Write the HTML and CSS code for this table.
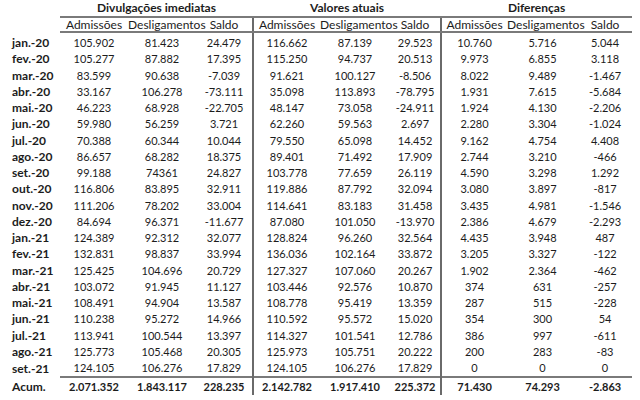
FILE: index.html
```html
<!DOCTYPE html>
<html lang="pt">
<head>
<meta charset="utf-8">
<title>Admissões e desligamentos</title>
<link rel="stylesheet" href="styles.css">
</head>
<body>
<table class="grid">
  <colgroup>
    <col class="c-label">
    <col class="c1a"><col class="c1d"><col class="c1s">
    <col class="c2a"><col class="c2d"><col class="c2s">
    <col class="c3a"><col class="c3d"><col class="c3s">
  </colgroup>
  <thead>
    <tr class="groups">
      <th class="blank"></th>
      <th colspan="3" class="grp">Divulgações imediatas</th>
      <th colspan="3" class="grp">Valores atuais</th>
      <th colspan="3" class="grp">Diferenças</th>
    </tr>
    <tr class="subs">
      <th class="blank"></th>
      <th>Admissões</th><th>Desligamentos</th><th>Saldo</th>
      <th class="sep">Admissões</th><th>Desligamentos</th><th>Saldo</th>
      <th class="sep">Admissões</th><th>Desligamentos</th><th>Saldo</th>
    </tr>
  </thead>
  <tbody>
    <tr class="first"><th>jan.-20</th><td>105.902</td><td>81.423</td><td>24.479</td><td class="sep">116.662</td><td>87.139</td><td>29.523</td><td class="sep">10.760</td><td>5.716</td><td>5.044</td></tr>
    <tr><th>fev.-20</th><td>105.277</td><td>87.882</td><td>17.395</td><td class="sep">115.250</td><td>94.737</td><td>20.513</td><td class="sep">9.973</td><td>6.855</td><td>3.118</td></tr>
    <tr><th>mar.-20</th><td>83.599</td><td>90.638</td><td>-7.039</td><td class="sep">91.621</td><td>100.127</td><td>-8.506</td><td class="sep">8.022</td><td>9.489</td><td>-1.467</td></tr>
    <tr><th>abr.-20</th><td>33.167</td><td>106.278</td><td>-73.111</td><td class="sep">35.098</td><td>113.893</td><td>-78.795</td><td class="sep">1.931</td><td>7.615</td><td>-5.684</td></tr>
    <tr><th>mai.-20</th><td>46.223</td><td>68.928</td><td>-22.705</td><td class="sep">48.147</td><td>73.058</td><td>-24.911</td><td class="sep">1.924</td><td>4.130</td><td>-2.206</td></tr>
    <tr><th>jun.-20</th><td>59.980</td><td>56.259</td><td>3.721</td><td class="sep">62.260</td><td>59.563</td><td>2.697</td><td class="sep">2.280</td><td>3.304</td><td>-1.024</td></tr>
    <tr><th>jul.-20</th><td>70.388</td><td>60.344</td><td>10.044</td><td class="sep">79.550</td><td>65.098</td><td>14.452</td><td class="sep">9.162</td><td>4.754</td><td>4.408</td></tr>
    <tr><th>ago.-20</th><td>86.657</td><td>68.282</td><td>18.375</td><td class="sep">89.401</td><td>71.492</td><td>17.909</td><td class="sep">2.744</td><td>3.210</td><td>-466</td></tr>
    <tr><th>set.-20</th><td>99.188</td><td>74361</td><td>24.827</td><td class="sep">103.778</td><td>77.659</td><td>26.119</td><td class="sep">4.590</td><td>3.298</td><td>1.292</td></tr>
    <tr><th>out.-20</th><td>116.806</td><td>83.895</td><td>32.911</td><td class="sep">119.886</td><td>87.792</td><td>32.094</td><td class="sep">3.080</td><td>3.897</td><td>-817</td></tr>
    <tr><th>nov.-20</th><td>111.206</td><td>78.202</td><td>33.004</td><td class="sep">114.641</td><td>83.183</td><td>31.458</td><td class="sep">3.435</td><td>4.981</td><td>-1.546</td></tr>
    <tr><th>dez.-20</th><td>84.694</td><td>96.371</td><td>-11.677</td><td class="sep">87.080</td><td>101.050</td><td>-13.970</td><td class="sep">2.386</td><td>4.679</td><td>-2.293</td></tr>
    <tr><th>jan.-21</th><td>124.389</td><td>92.312</td><td>32.077</td><td class="sep">128.824</td><td>96.260</td><td>32.564</td><td class="sep">4.435</td><td>3.948</td><td>487</td></tr>
    <tr><th>fev.-21</th><td>132.831</td><td>98.837</td><td>33.994</td><td class="sep">136.036</td><td>102.164</td><td>33.872</td><td class="sep">3.205</td><td>3.327</td><td>-122</td></tr>
    <tr><th>mar.-21</th><td>125.425</td><td>104.696</td><td>20.729</td><td class="sep">127.327</td><td>107.060</td><td>20.267</td><td class="sep">1.902</td><td>2.364</td><td>-462</td></tr>
    <tr><th>abr.-21</th><td>103.072</td><td>91.945</td><td>11.127</td><td class="sep">103.446</td><td>92.576</td><td>10.870</td><td class="sep">374</td><td>631</td><td>-257</td></tr>
    <tr><th>mai.-21</th><td>108.491</td><td>94.904</td><td>13.587</td><td class="sep">108.778</td><td>95.419</td><td>13.359</td><td class="sep">287</td><td>515</td><td>-228</td></tr>
    <tr><th>jun.-21</th><td>110.238</td><td>95.272</td><td>14.966</td><td class="sep">110.592</td><td>95.572</td><td>15.020</td><td class="sep">354</td><td>300</td><td>54</td></tr>
    <tr><th>jul.-21</th><td>113.941</td><td>100.544</td><td>13.397</td><td class="sep">114.327</td><td>101.541</td><td>12.786</td><td class="sep">386</td><td>997</td><td>-611</td></tr>
    <tr><th>ago.-21</th><td>125.773</td><td>105.468</td><td>20.305</td><td class="sep">125.973</td><td>105.751</td><td>20.222</td><td class="sep">200</td><td>283</td><td>-83</td></tr>
    <tr><th>set.-21</th><td>124.105</td><td>106.276</td><td>17.829</td><td class="sep">124.105</td><td>106.276</td><td>17.829</td><td class="sep">0</td><td>0</td><td>0</td></tr>
  </tbody>
  <tfoot>
    <tr class="total"><th>Acum.</th><td>2.071.352</td><td>1.843.117</td><td>228.235</td><td class="sep">2.142.782</td><td>1.917.410</td><td>225.372</td><td class="sep">71.430</td><td>74.293</td><td>-2.863</td></tr>
  </tfoot>
</table>
</body>
</html>
```

FILE: styles.css
```css
html, body {
  margin: 0;
  padding: 0;
  background: #ffffff;
}

body {
  font-family: Lato, "Liberation Sans", sans-serif;
  font-size: 12px;
  color: #1c1c1c;
}

.grid {
  border-collapse: collapse;
  border-spacing: 0;
  table-layout: fixed;
  width: 632px;
}

.c-label { width: 60px; }
.c1a { width: 68px; }
.c1d { width: 68px; }
.c1s { width: 57px; }
.c2a { width: 67px; }
.c2d { width: 70px; }
.c2s { width: 51px; }
.c3a { width: 66px; }
.c3d { width: 71px; }
.c3s { width: 54px; }

.grid th,
.grid td {
  padding: 0;
  white-space: nowrap;
  text-align: center;
  font-weight: normal;
}

.grid td {
  font-size: 11px;
}

.grid .groups th {
  height: 16px;
  line-height: 16px;
  font-weight: bold;
}

.grid .groups .grp {
  border-bottom: 2px solid #7a7a7a;
}

.grid .subs th {
  height: 13px;
  line-height: 13px;
  border-bottom: 2px solid #7a7a7a;
}

.grid .subs .blank {
  border-bottom: none;
}

.grid .sep {
  border-left: 2px solid #6a6a6a;
}

.grid tbody td,
.grid tbody th {
  height: 16.25px;
  line-height: 16px;
}

.grid tbody tr.first td,
.grid tbody tr.first th {
  padding-top: 2px;
}

.grid tbody th,
.grid tfoot th {
  text-align: left;
  padding-left: 12px;
  font-weight: bold;
}

.grid .total td,
.grid .total th {
  height: 17px;
  line-height: 17px;
  font-weight: bold;
  border-top: 2px solid #7a7a7a;
}

.grid .total th {
  border-top: none;
}
```
